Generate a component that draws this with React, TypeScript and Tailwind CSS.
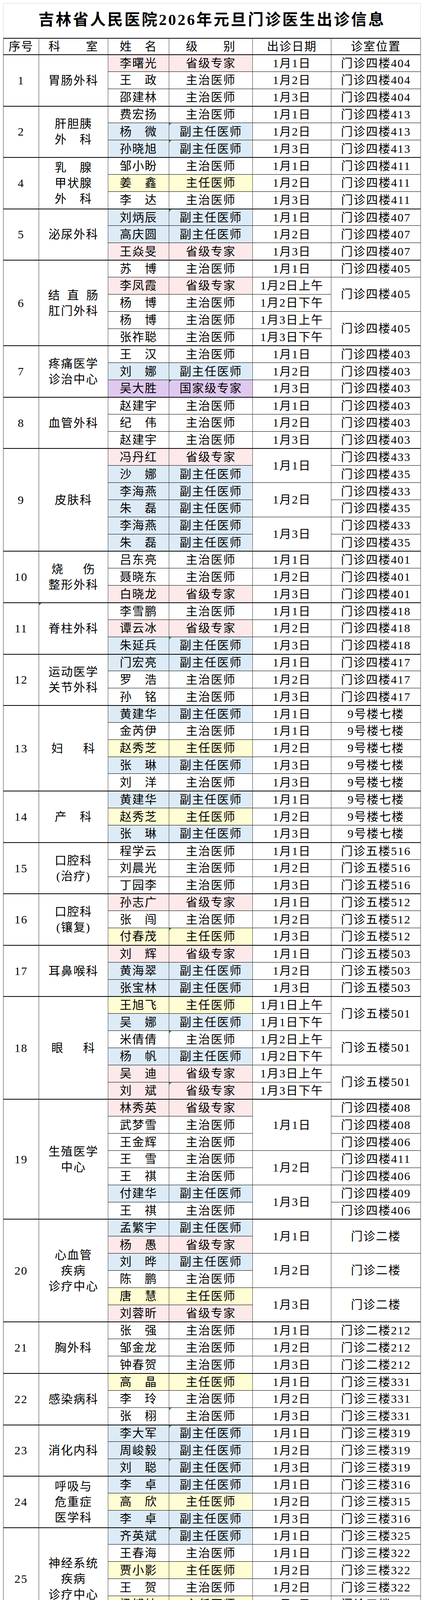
import React from 'react';

type Lv = 'S' | 'F' | 'Z' | 'C' | 'G';

const LEVELS: Record<Lv, { label: string; bg: string }> = {
  S: { label: '省级专家', bg: 'bg-[#fde9ea]' },
  F: { label: '副主任医师', bg: 'bg-[#ddebf7]' },
  Z: { label: '主任医师', bg: 'bg-[#fffdd3]' },
  C: { label: '主治医师', bg: 'bg-white' },
  G: { label: '国家级专家', bg: 'bg-[#dfc9ef]' },
};

// grid row spans, written out so Tailwind picks them up
const SPAN: Record<number, string> = {
  1: '',
  2: 'row-span-2',
  3: 'row-span-3',
  5: 'row-span-5',
  6: 'row-span-6',
  7: 'row-span-7',
};

type Row = {
  name: string;
  lv: Lv;
  date: string | null;
  room: string | null;
  dateSpan?: number;
  roomSpan?: number;
  flag?: boolean;
};

type Dept = {
  no: string;
  lines: string[];
  rows: Row[];
  flag?: boolean;
};

const r = (
  name: string,
  lv: Lv,
  date: string | null,
  room: string | null,
  extra: Partial<Row> = {},
): Row => ({ name, lv, date, room, ...extra });

const SP = '\u2002';
const WIDE = '\u2003\u2002';

const DEPTS: Dept[] = [
  {
    no: '1',
    lines: ['胃肠外科'],
    rows: [
      r('李曙光', 'S', '1月1日', '门诊四楼404'),
      r('王　政', 'C', '1月2日', '门诊四楼404'),
      r('邵建林', 'C', '1月3日', '门诊四楼404'),
    ],
  },
  {
    no: '2',
    lines: ['肝胆胰', '外　科'],
    rows: [
      r('费宏扬', 'C', '1月1日', '门诊四楼413'),
      r('杨　微', 'F', '1月2日', '门诊四楼413', { flag: true }),
      r('孙晓旭', 'F', '1月3日', '门诊四楼413', { flag: true }),
    ],
  },
  {
    no: '4',
    lines: ['乳　腺', '甲状腺', '外　科'],
    rows: [
      r('邹小盼', 'C', '1月1日', '门诊四楼411'),
      r('姜　鑫', 'Z', '1月2日', '门诊四楼411'),
      r('李　达', 'C', '1月3日', '门诊四楼411'),
    ],
  },
  {
    no: '5',
    lines: ['泌尿外科'],
    rows: [
      r('刘炳辰', 'F', '1月1日', '门诊四楼407', { flag: true }),
      r('高庆圆', 'F', '1月2日', '门诊四楼407'),
      r('王焱旻', 'S', '1月3日', '门诊四楼407'),
    ],
  },
  {
    no: '6',
    lines: [`结${SP}直${SP}肠`, '肛门外科'],
    rows: [
      r('苏　博', 'C', '1月1日', '门诊四楼405'),
      r('李凤霞', 'S', '1月2日上午', '门诊四楼405', { roomSpan: 2 }),
      r('杨　博', 'C', '1月2日下午', null),
      r('杨　博', 'C', '1月3日上午', '门诊四楼405', { roomSpan: 2 }),
      r('张祚聪', 'C', '1月3日下午', null),
    ],
  },
  {
    no: '7',
    lines: ['疼痛医学', '诊治中心'],
    rows: [
      r('王　汉', 'C', '1月1日', '门诊四楼403'),
      r('刘　娜', 'F', '1月2日', '门诊四楼403'),
      r('吴大胜', 'G', '1月3日', '门诊四楼403', { flag: true }),
    ],
  },
  {
    no: '8',
    lines: ['血管外科'],
    rows: [
      r('赵建宇', 'C', '1月1日', '门诊四楼403'),
      r('纪　伟', 'C', '1月2日', '门诊四楼403'),
      r('赵建宇', 'C', '1月3日', '门诊四楼403'),
    ],
  },
  {
    no: '9',
    lines: ['皮肤科'],
    rows: [
      r('冯丹红', 'S', '1月1日', '门诊四楼433', { dateSpan: 2 }),
      r('沙　娜', 'F', null, '门诊四楼435'),
      r('李海燕', 'F', '1月2日', '门诊四楼433', { dateSpan: 2 }),
      r('朱　磊', 'F', null, '门诊四楼435'),
      r('李海燕', 'F', '1月3日', '门诊四楼433', { dateSpan: 2 }),
      r('朱　磊', 'F', null, '门诊四楼435'),
    ],
  },
  {
    no: '10',
    lines: [`烧${WIDE}伤`, '整形外科'],
    rows: [
      r('吕东亮', 'C', '1月1日', '门诊四楼401'),
      r('聂晓东', 'C', '1月2日', '门诊四楼401'),
      r('白晓龙', 'S', '1月3日', '门诊四楼401'),
    ],
  },
  {
    no: '11',
    lines: ['脊柱外科'],
    flag: true,
    rows: [
      r('李雪鹏', 'C', '1月1日', '门诊四楼418'),
      r('谭云冰', 'S', '1月2日', '门诊四楼418'),
      r('朱延兵', 'F', '1月3日', '门诊四楼418', { flag: true }),
    ],
  },
  {
    no: '12',
    lines: ['运动医学', '关节外科'],
    rows: [
      r('门宏亮', 'F', '1月1日', '门诊四楼417'),
      r('罗　浩', 'C', '1月2日', '门诊四楼417'),
      r('孙　铭', 'C', '1月3日', '门诊四楼417'),
    ],
  },
  {
    no: '13',
    lines: [`妇${WIDE}科`],
    rows: [
      r('黄建华', 'F', '1月1日', '9号楼七楼'),
      r('金芮伊', 'C', '1月1日', '9号楼七楼'),
      r('赵秀芝', 'Z', '1月2日', '9号楼七楼'),
      r('张　琳', 'F', '1月3日', '9号楼七楼'),
      r('刘　洋', 'C', '1月3日', '9号楼七楼'),
    ],
  },
  {
    no: '14',
    lines: ['产　科'],
    rows: [
      r('黄建华', 'F', '1月1日', '9号楼七楼'),
      r('赵秀芝', 'Z', '1月2日', '9号楼七楼'),
      r('张　琳', 'F', '1月3日', '9号楼七楼'),
    ],
  },
  {
    no: '15',
    lines: ['口腔科', '(治疗)'],
    rows: [
      r('程学云', 'C', '1月1日', '门诊五楼516'),
      r('刘晨光', 'C', '1月2日', '门诊五楼516'),
      r('丁园李', 'C', '1月3日', '门诊五楼516'),
    ],
  },
  {
    no: '16',
    lines: ['口腔科', '(镶复)'],
    rows: [
      r('孙志广', 'S', '1月1日', '门诊五楼512'),
      r('张　闯', 'C', '1月2日', '门诊五楼512'),
      r('付春茂', 'Z', '1月3日', '门诊五楼512', { flag: true }),
    ],
  },
  {
    no: '17',
    lines: ['耳鼻喉科'],
    rows: [
      r('刘　辉', 'S', '1月1日', '门诊五楼503'),
      r('黄海翠', 'F', '1月2日', '门诊五楼503'),
      r('张宝林', 'F', '1月3日', '门诊五楼503'),
    ],
  },
  {
    no: '18',
    lines: [`眼${WIDE}科`],
    rows: [
      r('王旭飞', 'Z', '1月1日上午', '门诊五楼501', { roomSpan: 2 }),
      r('吴　娜', 'F', '1月1日下午', null),
      r('米倩倩', 'C', '1月2日上午', '门诊五楼501', { roomSpan: 2, flag: true }),
      r('杨　帆', 'F', '1月2日下午', null),
      r('吴　迪', 'S', '1月3日上午', '门诊五楼501', { roomSpan: 2 }),
      r('刘　斌', 'S', '1月3日下午', null, { flag: true }),
    ],
  },
  {
    no: '19',
    lines: ['生殖医学', '中心'],
    rows: [
      r('林秀英', 'S', '1月1日', '门诊四楼408', { dateSpan: 3 }),
      r('武梦雪', 'C', null, '门诊四楼408'),
      r('王金辉', 'C', null, '门诊四楼406'),
      r('王　雪', 'C', '1月2日', '门诊四楼411', { dateSpan: 2 }),
      r('王　祺', 'C', null, '门诊四楼406'),
      r('付建华', 'F', '1月3日', '门诊四楼409', { dateSpan: 2 }),
      r('王　祺', 'C', null, '门诊四楼406'),
    ],
  },
  {
    no: '20',
    lines: ['心血管', '疾病', '诊疗中心'],
    rows: [
      r('孟繁宇', 'F', '1月1日', '门诊二楼', { dateSpan: 2, roomSpan: 2 }),
      r('杨　愚', 'S', null, null),
      r('刘　晔', 'F', '1月2日', '门诊二楼', { dateSpan: 2, roomSpan: 2 }),
      r('陈　鹏', 'C', null, null),
      r('唐　慧', 'Z', '1月3日', '门诊二楼', { dateSpan: 2, roomSpan: 2 }),
      r('刘蓉昕', 'S', null, null),
    ],
  },
  {
    no: '21',
    lines: ['胸外科'],
    rows: [
      r('张　强', 'C', '1月1日', '门诊二楼212'),
      r('邹金龙', 'C', '1月2日', '门诊二楼212'),
      r('钟春贺', 'C', '1月3日', '门诊二楼212'),
    ],
  },
  {
    no: '22',
    lines: ['感染病科'],
    rows: [
      r('高　晶', 'Z', '1月1日', '门诊三楼331'),
      r('李　玲', 'C', '1月2日', '门诊三楼331'),
      r('张　栩', 'C', '1月3日', '门诊三楼331', { flag: true }),
    ],
  },
  {
    no: '23',
    lines: ['消化内科'],
    rows: [
      r('李大军', 'F', '1月1日', '门诊三楼319', { flag: true }),
      r('周峻毅', 'F', '1月2日', '门诊三楼319'),
      r('刘　聪', 'F', '1月3日', '门诊三楼319', { flag: true }),
    ],
  },
  {
    no: '24',
    lines: ['呼吸与', '危重症', '医学科'],
    rows: [
      r('李　卓', 'F', '1月1日', '门诊三楼316'),
      r('高　欣', 'Z', '1月2日', '门诊三楼315'),
      r('李　卓', 'F', '1月3日', '门诊三楼316'),
    ],
  },
  {
    no: '25',
    lines: ['神经系统', '疾病', '诊疗中心'],
    rows: [
      r('齐英斌', 'F', '1月1日', '门诊三楼325', { flag: true }),
      r('王春海', 'C', '1月1日', '门诊三楼322'),
      r('贾小影', 'Z', '1月2日', '门诊三楼322'),
      r('王　贺', 'C', '1月2日', '门诊三楼322'),
      r('梁博纳', 'Z', '1月3日', '门诊三楼322'),
      r('刘　松', 'C', '1月3日', '门诊三楼322'),
    ],
  },
  {
    no: '26',
    lines: ['内分泌', '代谢病科'],
    rows: [
      r('齐晨蕊', 'F', '1月1日', '门诊三楼311', { flag: true }),
      r('翟羽垚', 'C', '1月2日', '门诊三楼312'),
      r('姜艳静', 'Z', '1月3日', '门诊三楼311', { flag: true }),
    ],
  },
  {
    no: '27',
    lines: [`肾${SP}内${SP}科`],
    rows: [
      r('马　爽', 'F', '1月1日', '门诊三楼320'),
      r('王松岩', 'Z', '1月2日', '门诊三楼320'),
      r('王松岩', 'Z', '1月3日', '门诊三楼320', { flag: true }),
    ],
  },
  {
    no: '28',
    lines: [`血${SP}液${SP}科`],
    rows: [
      r('王雪梅', 'S', '1月1日', '门诊二楼232'),
      r('封　韬', 'F', '1月2日', '门诊二楼232'),
      r('付　堃', 'S', '1月3日', '门诊二楼232'),
    ],
  },
  {
    no: '29',
    lines: ['风　湿', '免疫科'],
    rows: [
      r('吕英春', 'F', '1月1日', '门诊四楼402', { flag: true }),
      r('孟天犁', 'F', '1月2日', '门诊四楼402', { flag: true }),
      r('江　涛', 'F', '1月3日', '门诊四楼402', { flag: true }),
    ],
  },
  {
    no: '30',
    lines: ['肿　瘤', '内一科'],
    rows: [
      r('姜艳丽', 'F', '1月1日', '门诊三楼333'),
      r('丁　旭', 'F', '1月2日', '门诊三楼333'),
      r('张海滨', 'C', '1月3日', '门诊三楼333'),
    ],
  },
  {
    no: '31',
    lines: ['肿　瘤', '内二科'],
    rows: [
      r('杨　影', 'F', '1月1日', '门诊三楼332'),
      r('侯俊杰', 'S', '1月2日', '门诊三楼332'),
      r('倪志强', 'F', '1月3日', '门诊三楼332'),
    ],
  },
  {
    no: '32',
    lines: [`儿${WIDE}科`],
    rows: [
      r('黄春梅', 'C', '1月1日', '门诊三楼332'),
      r('陆　彪', 'C', '1月2日', '门诊三楼332'),
      r('耿　莹', 'C', '1月3日', '门诊三楼332'),
    ],
  },
  {
    no: '33',
    lines: [`中${SP}医${SP}科`],
    rows: [
      r('曹秋莲', 'S', '1月1日', '门诊二楼209'),
      r('谭志新', 'S', '1月2日', '门诊二楼209'),
      r('李东辉', 'S', '1月3日', '门诊二楼209'),
    ],
  },
  {
    no: '34',
    lines: ['康复', '医学中心'],
    rows: [
      r('王　哲', 'F', '1月1日', '门诊四楼401'),
      r('李　赟', 'C', '1月2日', '门诊四楼401'),
      r('李凤利', 'F', '1月3日', '门诊四楼401', { flag: true }),
    ],
  },
  {
    no: '35',
    lines: ['老　年', '医学科'],
    rows: [
      r('宋　梅', 'F', '1月1日', '门诊二楼207'),
      r('郑　平', 'S', '1月2日', '门诊二楼207'),
      r('郑　平', 'S', '1月3日', '门诊二楼207'),
    ],
  },
  {
    no: '36',
    lines: ['凯旋内科'],
    rows: [
      r('孙祎菲', 'C', '1月1日', '凯旋院区一楼107'),
      r('解　影', 'C', '1月2日', '凯旋院区一楼107'),
      r('董立丽', 'C', '1月3日', '凯旋院区一楼107'),
    ],
  },
];

function Flag() {
  return (
    <span className="absolute left-0 top-0 h-0 w-0 border-t-[6px] border-r-[6px] border-t-[#1e9a2a] border-r-transparent" />
  );
}

// every cell draws its own right and bottom line; the first column adds the left one
const cell =
  'relative flex items-center justify-center border-b border-r border-b-black border-r-[#3a3a3a] text-center';

function DeptCells({ dept }: { dept: Dept }) {
  return (
    <>
      {dept.rows.map((row, i) => {
        const level = LEVELS[row.lv];
        const top = i === 0 ? 'border-t border-t-black' : '';
        const small = row.room?.startsWith('凯旋');
        return (
          <React.Fragment key={i}>
            {i === 0 && (
              <>
                <div className={`${cell} ${top} ${SPAN[dept.rows.length]} border-l border-l-[#3a3a3a]`}>
                  {dept.no}
                </div>
                <div className={`${cell} ${top} ${SPAN[dept.rows.length]} flex-col leading-10`}>
                  {dept.flag && <Flag />}
                  {dept.lines.map((line, j) => (
                    <div key={j}>{line}</div>
                  ))}
                </div>
              </>
            )}
            <div className={`${cell} ${top} ${level.bg}`}>{row.name}</div>
            <div className={`${cell} ${top} ${level.bg}`}>
              {row.flag && <Flag />}
              {level.label}
            </div>
            {row.date !== null && (
              <div className={`${cell} ${top} ${SPAN[row.dateSpan ?? 1]}`}>{row.date}</div>
            )}
            {row.room !== null && (
              <div
                className={`${cell} ${top} ${SPAN[row.roomSpan ?? 1]} ${small ? 'text-[22px]' : ''}`}
              >
                {row.room}
              </div>
            )}
          </React.Fragment>
        );
      })}
    </>
  );
}

export default function App() {
  return (
    <div className="bg-white pl-2 pt-2 font-['Liberation_Serif','Noto_Sans_CJK_SC',serif] text-black">
      <div className="flex h-[89px] w-[1069px] items-center justify-center border-x border-t border-[#d6d6d6] pb-1">
        <h1 className="text-[40px] font-bold leading-none tracking-[4px]">
          吉林省人民医院2026年元旦门诊医生出诊信息
        </h1>
      </div>
      <div className="grid w-[1069px] grid-cols-[92px_177px_156px_214px_201px_229px] grid-rows-[43px] auto-rows-[43.85px] text-[30px] leading-none tracking-[2px]">
        {['序号', '科　　室', '姓　名', '级　　别', '出诊日期', '诊室位置'].map((h, i) => (
          <div
            key={h}
            className={`${cell} border-t-2 border-t-black ${i === 0 ? 'border-l border-l-[#3a3a3a]' : ''}`}
          >
            {h}
          </div>
        ))}
        {DEPTS.map((dept) => (
          <DeptCells key={dept.no} dept={dept} />
        ))}
      </div>
    </div>
  );
}
